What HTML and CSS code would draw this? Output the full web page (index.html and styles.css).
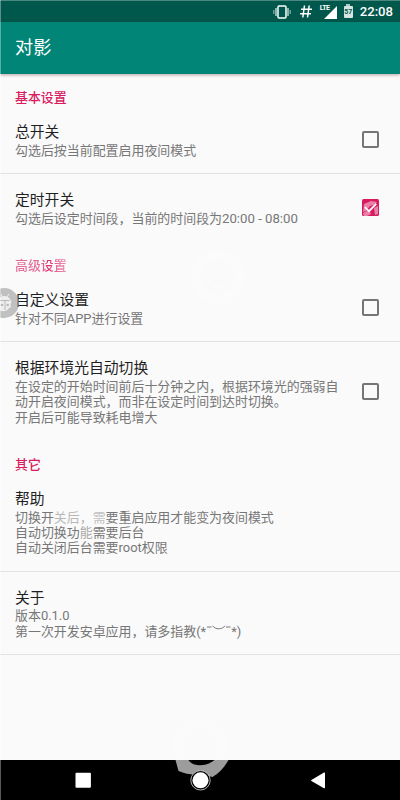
FILE: index.html
```html
<!DOCTYPE html>
<html lang="zh-CN">
<head>
<meta charset="utf-8">
<title>对影</title>
<link rel="stylesheet" href="styles.css">
</head>
<body>
<div class="screen">
  <header class="status">
    <svg class="vibrate" viewBox="0 0 18 14"><rect x="5" y="1" width="8" height="12" rx="1" fill="none" stroke="#fff" stroke-width="1.5"/><path d="M3 3v8M15 3v8" stroke="#b8d2cd" stroke-width="1.5"/><path d="M.8 5v4M17.2 5v4" stroke="#80aaa2" stroke-width="1.3"/></svg>
    <svg class="hash" viewBox="0 0 12 13"><path d="M4.5.5 2.8 12.5M9.2.5 7.5 12.5M1 4.2h11M0 8.8h11" stroke="#fff" stroke-width="1.5"/></svg>
    <div class="signal"><span class="lte">LTE</span><svg viewBox="0 0 13 13"><path d="M13 0v13H0z" fill="#fff"/></svg></div>
    <div class="battery"><span>57</span></div>
    <span class="clock">22:08</span>
  </header>
  <div class="appbar"><h1>对影</h1></div>
  <main>
    <h2>基本设置</h2>
    <section class="row"><div class="text"><h3>总开关</h3><p>勾选后按当前配置启用夜间模式</p></div><i class="box"></i></section>
    <section class="row"><div class="text"><h3>定时开关</h3><p>勾选后设定时间段，当前的时间段为<span class="time">20:00 - 08:00</span></p></div>
      <svg class="checked" viewBox="0 0 17 17"><rect width="17" height="17" rx="1.5" fill="#d81b60"/><path d="M2 5 9 2l6 1-3 3-4 1-4 5-3 1zM1 14l6-3 2 4-4 2H2zM12 9l4-2v8l-3 1z" fill="#fff" opacity=".45"/><path d="m2.8 8.2 4.2 4 7.2-7.4" fill="none" stroke="#fff" stroke-width="1.8"/></svg>
    </section>
    <h2 class="faded">高级设置</h2>
    <section class="row"><div class="text"><h3>自定义设置</h3><p>针对不同APP进行设置</p></div><i class="box"></i></section>
    <section class="row"><div class="text"><h3>根据环境光自动切换</h3><p>在设定的开始时间前后十分钟之内，根据环境光的强弱自<br>动开启夜间模式，而非在设定时间到达时切换。<br>开启后可能导致耗电增大</p></div><i class="box"></i></section>
    <h2>其它</h2>
    <section class="row"><div class="text"><h3>帮助</h3><p>切换开<span class="dim">关后，</span><span class="dim2">需</span>要重启应用才能变为夜间模式<br>自动切换功<span class="dim3">能</span>需要后台<br>自动关闭后台需要root权限</p></div></section>
    <section class="row"><div class="text"><h3>关于</h3><p>版本0.1.0<br>第一次开发安卓应用，请多指教(*<svg class="smile" viewBox="0 0 25 12"><path d="M1 3h4.500M20 3h4.500M6.500 1.800c3 4 9.500 4 12.500 0" fill="none" stroke="#777" stroke-width="1"/></svg>*)</p></div></section>
  </main>
  <nav>
    <svg viewBox="0 0 400 40"><path d="M25.500 0h13c4 7 18 7 26 0h14c-4 7-9 13-16 17-12-3-23-1-34-6z" transform="translate(150)" fill="#9c9c9c"/><rect x="75.500" y="12.700" width="15.400" height="15" rx="1" fill="#fff"/><circle cx="200.500" cy="20.300" r="9.700" fill="#000" stroke="#ddd" stroke-width=".8"/><circle cx="200.500" cy="20.300" r="8" fill="#fff"/><path d="M324 12.500c.6-.3 1 0 1 .6v14.500c0 .6-.4.9-1 .6l-12.600-7.200q-.7-.5 0-1z" fill="#fff"/></svg>
  </nav>
  <svg class="bubble" viewBox="0 0 20 32"><circle cx="4" cy="16" r="15" fill="#999" opacity=".6"/><path d="M0 10.500c3-2.500 8-2 10 1.500l1.500 3-1 2 .5 3-2 1c-2 3.500-6 4-9 2.500z" fill="#eee"/><path d="M5 13v10M0 13.500h9.500" fill="none" stroke="#b8b8b8" stroke-width="1"/><g fill="#b8b8b8"><circle cx="2" cy="18" r="1.300"/><circle cx="7.700" cy="18" r="1.300"/></g><path d="m2 10-1-3M7 10l2-3" stroke="#eee" fill="none"/></svg>
  <svg class="mark mark-a" viewBox="0 0 60 60"><circle cx="30" cy="30" r="22"/><path d="M20 34q10 12 20-1"/></svg>
  <svg class="mark mark-b" viewBox="0 0 60 60"><circle cx="30" cy="30" r="22"/><path d="M20 34q10 12 20-1"/></svg>
</div>
</body>
</html>
```

FILE: styles.css
```css
* { box-sizing: border-box; }
body { margin: 0; font-family: Roboto, "Noto Sans CJK SC", sans-serif; }
h1, h2, h3, p { margin: 0; font-weight: 400; }
.screen {
  position: relative;
  width: 400px;
  height: 800px;
  overflow: hidden;
  display: flex;
  flex-direction: column;
  background: #fafafa;
}
.screen::before {
  content: "";
  position: absolute;
  z-index: 2;
  inset: 0 auto 0 0;
  width: 1px;
  background: rgba(255, 255, 255, .35);
}
.status {
  height: 22px;
  flex: none;
  display: flex;
  align-items: center;
  justify-content: flex-end;
  padding-right: 7px;
  background: #00574b;
  border-top: 1px solid #4a897f;
  color: #fff;
}
.vibrate { width: 18px; height: 14px; margin-right: 9px; }
.hash { width: 12px; height: 13px; margin-right: 8px; }
.signal { width: 17px; height: 14px; position: relative; margin-right: 7px; }
.signal svg { position: absolute; right: 0; bottom: 0; width: 13px; height: 13px; }
.lte {
  position: absolute;
  left: 0;
  top: 0;
  z-index: 1;
  font: 700 7px/7px Roboto, sans-serif;
  letter-spacing: -.6px;
  text-shadow: 1px 0 #00574b;
}
.battery {
  position: relative;
  width: 9px;
  height: 12px;
  margin-right: 7px;
  border-radius: 1px;
  background: #d7e4e1;
  color: #00574b;
  font: 700 7px/13px Roboto, sans-serif;
  text-align: center;
}
.battery::before {
  content: "";
  position: absolute;
  left: 2.5px;
  top: -2px;
  width: 4px;
  height: 2px;
  background: #b0cac5;
}
.clock { font-size: 13.1px; font-weight: 500; line-height: 22px; }
.appbar {
  position: relative;
  z-index: 1;
  flex: none;
  height: 52px;
  display: flex;
  align-items: center;
  padding-left: 15px;
  background: #008577;
  box-shadow: 0 1px 3px rgba(90, 20, 40, .4);
}
h1 { color: #fff; font-size: 18.2px; font-weight: 400; line-height: 26px; }
main { flex: 1; min-height: 0; }
h2 {
  height: 32px;
  padding: 15px 15px 0;
  color: #d81b60;
  font-size: 12.9px;
  font-weight: 500;
  line-height: 17px;
}
.faded {
  color: transparent;
  background: linear-gradient(90deg, #e36c97 14px, #e56a97 42px, #dc2d6b 48px, #e36292 56px, #eda0bb 68px) 0 0 no-repeat;
  -webkit-background-clip: text;
  background-clip: text;
}
.row {
  display: flex;
  align-items: center;
  justify-content: space-between;
  padding: 15px 21px 15px 15px;
  border-bottom: 1px solid #e2e2e2;
}
.row:has(+ h2) { border-bottom-color: transparent; }
h3 { height: 21.8px; color: #1f1f1f; font-size: 14.8px; line-height: 22.2px; white-space: nowrap; }
p { color: #777; font-size: 12.94px; line-height: 15.3px; white-space: nowrap; }
.time { font-size: 13.2px; }
.dim { color: #b8b8b8; }
.dim2 { color: #c2c2c2; }
.dim3 { color: #aaa; }
.smile { width: 25px; height: 12px; }
.box { width: 17px; height: 17px; flex: none; border: 2px solid #757575; border-radius: 2px; }
.checked { width: 17px; height: 17px; flex: none; }
nav { flex: none; height: 40px; background: #000; }
nav svg { display: block; width: 400px; height: 40px; }
.bubble { position: absolute; left: 0; top: 287px; width: 20px; height: 32px; }
.mark { position: absolute; width: 60px; height: 60px; fill: none; stroke: #fff; stroke-width: 10; opacity: .25; }
.mark path { stroke-width: 3; }
.mark-a { left: 188px; top: 247px; }
.mark-b { left: 170px; top: 716px; clip-path: inset(0 0 16px 0); }
```
